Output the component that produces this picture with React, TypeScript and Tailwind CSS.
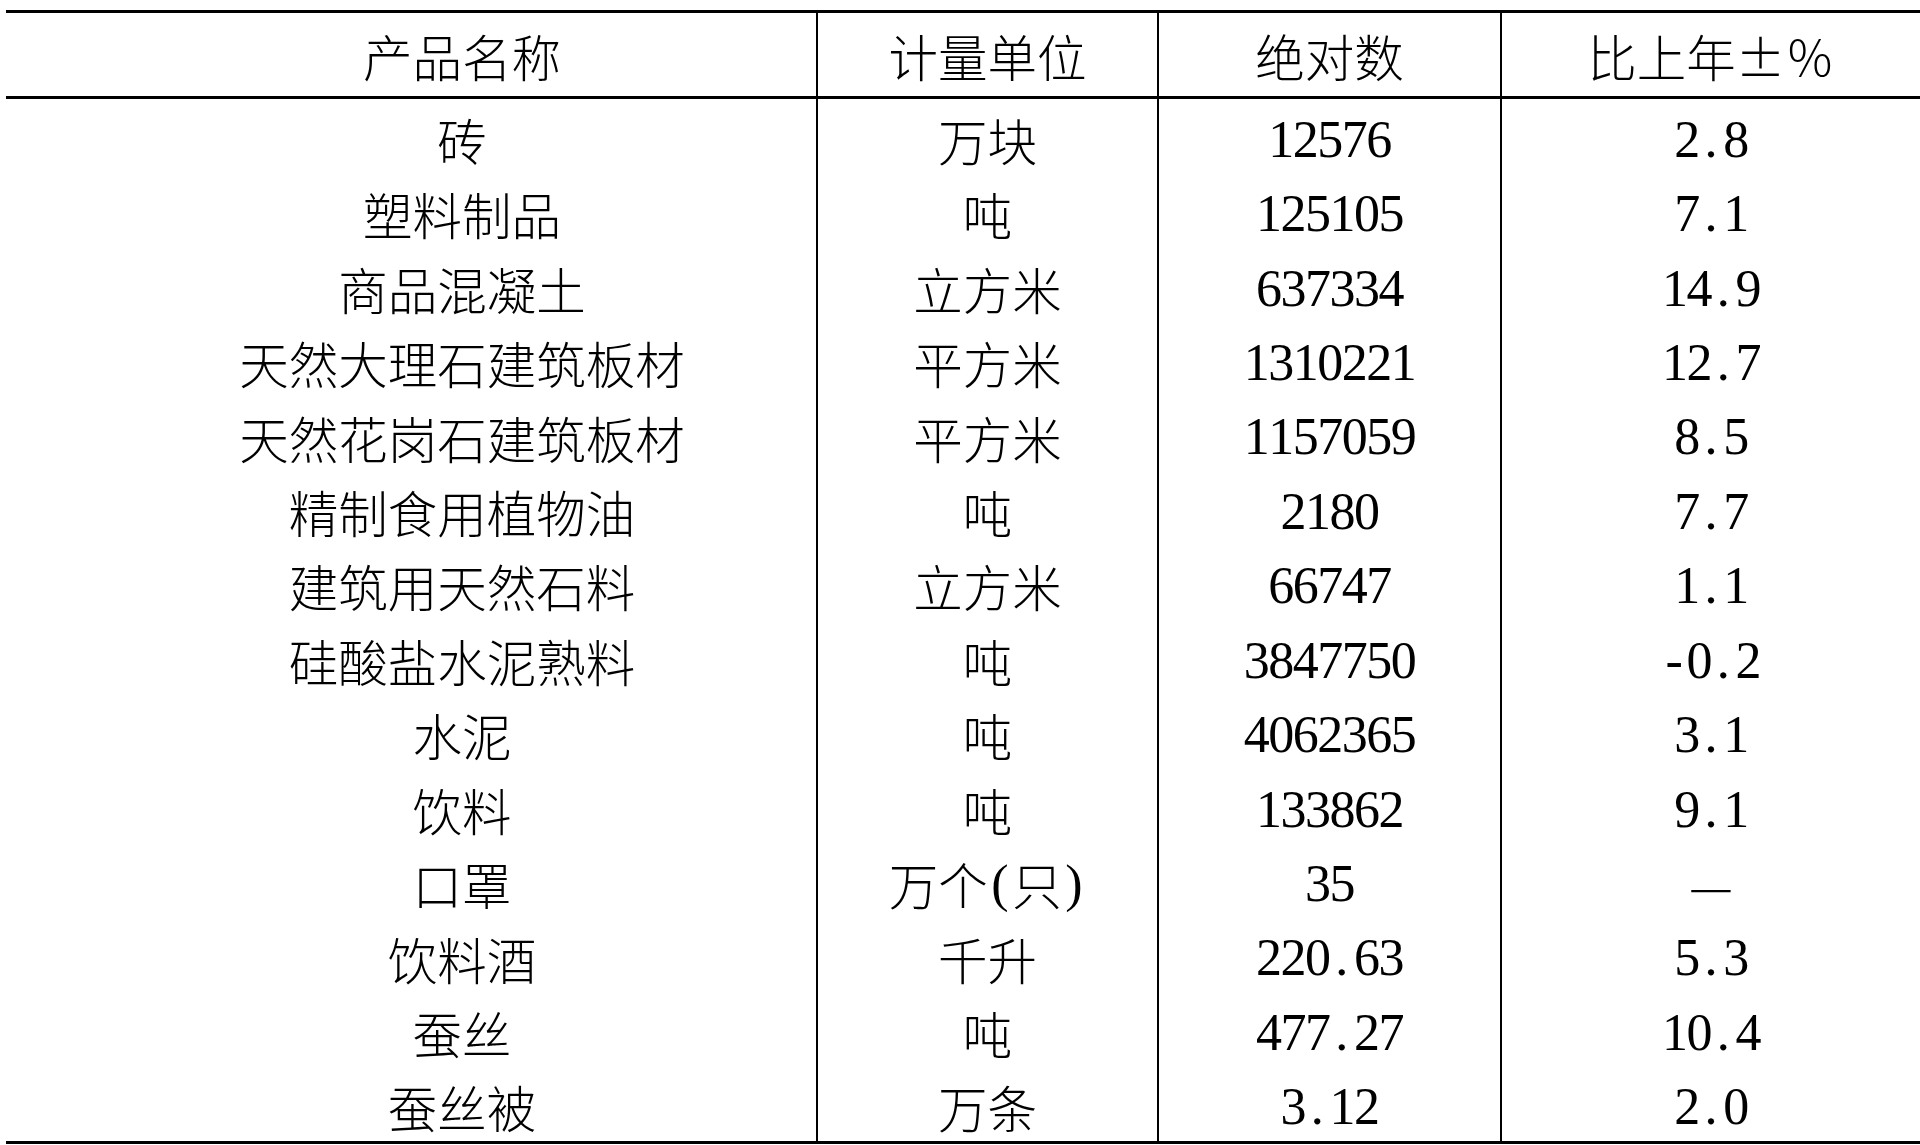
import React from "react";

const rows: [string, string, string, string][] = [
  ["砖", "万块", "12576", "2.8"],
  ["塑料制品", "吨", "125105", "7.1"],
  ["商品混凝土", "立方米", "637334", "14.9"],
  ["天然大理石建筑板材", "平方米", "1310221", "12.7"],
  ["天然花岗石建筑板材", "平方米", "1157059", "8.5"],
  ["精制食用植物油", "吨", "2180", "7.7"],
  ["建筑用天然石料", "立方米", "66747", "1.1"],
  ["硅酸盐水泥熟料", "吨", "3847750", "-0.2"],
  ["水泥", "吨", "4062365", "3.1"],
  ["饮料", "吨", "133862", "9.1"],
  ["口罩", "万个(只)", "35", "—"],
  ["饮料酒", "千升", "220.63", "5.3"],
  ["蚕丝", "吨", "477.27", "10.4"],
  ["蚕丝被", "万条", "3.12", "2.0"],
];

function T({ s }: { s: string }) {
  const parts = Array.from(s);
  return (
    <span className="inline-flex items-center whitespace-nowrap">
      {parts.map((c, i) =>
        /[0-9.\-()]/.test(c) ? (
          <span
            key={i}
            className="inline-block w-[24.5px] text-center font-['Liberation_Serif',serif] text-[52px] leading-none"
          >
            {c}
          </span>
        ) : (
          <span key={i} className="inline-block leading-none">
            {c}
          </span>
        )
      )}
    </span>
  );
}

const cols = "grid grid-cols-[812px_341px_343px_418px]";

export default function App() {
  return (
    <div className="w-[1920px] h-[1145px] bg-white pt-[10px] pl-[6px] text-black font-['Noto_Sans_CJK_SC',sans-serif] font-light text-[49.5px] overflow-hidden">
      <div className="h-[1134px] flex flex-col border-t-[3px] border-b-[3px] border-black">
        <div className={`${cols} h-[86px] border-b-[3px] border-black`}>
          <div className="border-r-2 border-black flex items-center justify-center pl-[102px] pt-[3px]">
            <T s="产品名称" />
          </div>
          <div className="border-r-2 border-black flex items-center justify-center pt-[3px]">
            <T s="计量单位" />
          </div>
          <div className="border-r-2 border-black flex items-center justify-center pt-[3px]">
            <T s="绝对数" />
          </div>
          <div className="flex items-center justify-center pt-[3px]">
            <T s="比上年±％" />
          </div>
        </div>
        <div className="flex-1 flex flex-col">
          {rows.map((r, i) => (
            <div key={i} className={`${cols} flex-1`}>
              <div className="border-r-2 border-black flex items-center justify-center pl-[102px] pt-[7px]">
                <T s={r[0]} />
              </div>
              <div className="border-r-2 border-black flex items-center justify-center pt-[7px]">
                <T s={r[1]} />
              </div>
              <div className="border-r-2 border-black flex items-center justify-center pt-[7px]">
                <T s={r[2]} />
              </div>
              <div className="flex items-center justify-center pt-[7px]">
                <T s={r[3]} />
              </div>
            </div>
          ))}
        </div>
      </div>
    </div>
  );
}
